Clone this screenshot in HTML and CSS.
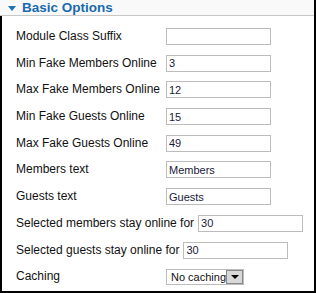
FILE: index.html
```html
<!DOCTYPE html>
<html lang="en">
<head>
    <meta charset="UTF-8">
    <title>Basic Options</title>
    <link rel="stylesheet" href="styles.css">
</head>
<body>
    <div class="panel">
        <div class="panel-head">
            <span class="arrow"></span>
            <h3>Basic Options</h3>
        </div>
        <div class="panel-body">
            <div class="row"><label>Module Class Suffix</label><input type="text" value=""></div>
            <div class="row"><label>Min Fake Members Online</label><input type="text" value="3"></div>
            <div class="row"><label>Max Fake Members Online</label><input type="text" value="12"></div>
            <div class="row"><label>Min Fake Guests Online</label><input type="text" value="15"></div>
            <div class="row"><label>Max Fake Guests Online</label><input type="text" value="49"></div>
            <div class="row"><label>Members text</label><input type="text" value="Members"></div>
            <div class="row"><label>Guests text</label><input type="text" value="Guests"></div>
            <div class="row"><label>Selected members stay online for</label><input type="text" value="30"></div>
            <div class="row"><label>Selected guests stay online for</label><input type="text" value="30"></div>
            <div class="row">
                <label>Caching</label>
                <div class="select">
                    <span>No caching</span>
                    <span class="select-btn"><i></i></span>
                </div>
            </div>
        </div>
    </div>
</body>
</html>
```

FILE: styles.css
```css
body {
    margin: 0;
    font-family: 'Liberation Sans', Arial, sans-serif;
    background: #fff;
}

.panel {
    width: 316px;
    height: 293px;
    box-sizing: border-box;
    border-right: 2px solid #000;
    border-bottom: 2px solid #000;
    display: flex;
    flex-direction: column;
}

/* Header */
.panel-head {
    height: 19px;
    background: #f9f9f9;
    border-bottom: 1px solid #c8c8c8;
    display: flex;
    align-items: center;
    padding-left: 8px;
}

.arrow {
    width: 0;
    height: 0;
    border-left: 4px solid transparent;
    border-right: 4px solid transparent;
    border-top: 5px solid #1a73b8;
    margin-right: 6px;
    margin-top: 2px;
}

.panel-head h3 {
    margin: 0;
    font-size: 13.5px;
    font-weight: bold;
    color: #1a6aae;
}

/* Body */
.panel-body {
    flex: 1;
    border-left: 2px solid #000;
    padding: 12px 0 0 14px;
}

.row {
    display: flex;
    align-items: flex-start;
    height: 26.7px;
}

.row label {
    min-width: 146px;
    margin-right: 4px;
    font-size: 12px;
    color: #111;
    line-height: 17px;
    white-space: nowrap;
}

.row input {
    width: 105px;
    height: 17px;
    box-sizing: border-box;
    border: 1px solid #bcbcbc;
    padding: 0 2px;
    font-family: 'Liberation Sans', Arial, sans-serif;
    font-size: 11px;
    color: #1a1a3a;
    margin: 0;
    outline: none;
}

/* Fake select */
.select {
    width: 78px;
    height: 16px;
    box-sizing: border-box;
    border: 1px solid #bcbcbc;
    display: flex;
    align-items: center;
    justify-content: space-between;
    font-size: 11px;
    color: #111;
    padding-left: 4px;
    margin-top: 1px;
    white-space: nowrap;
}

.select-btn {
    flex: none;
    width: 17px;
    height: 14px;
    box-sizing: border-box;
    background: #d8d8d8;
    border: 1px solid #888;
    display: flex;
    align-items: center;
    justify-content: center;
}

.select-btn i {
    width: 0;
    height: 0;
    border-left: 4px solid transparent;
    border-right: 4px solid transparent;
    border-top: 4px solid #000;
}
```
